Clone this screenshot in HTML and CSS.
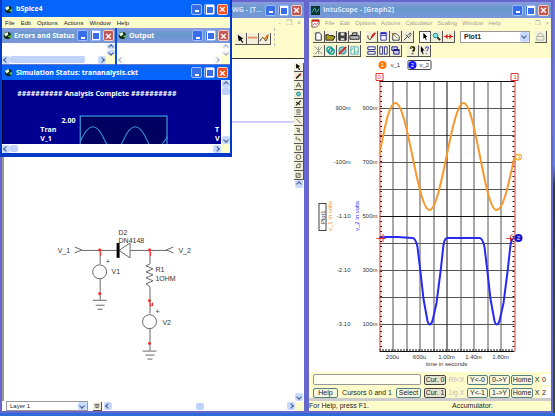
FILE: index.html
```
<!DOCTYPE html>
<html lang="en">
<head>
    <meta charset="UTF-8">
    <meta name="viewport" content="width=device-width, initial-scale=1.0">
    <title>bSpice4</title>
    <link rel="stylesheet" href="styles.css">
</head>
<body>
<div class="desktop">

    <!-- schematic editor -->
    <section class="window schematic">
        <header class="titlebar inactive">
            <h2 class="right">WG - [T...</h2>
            <div class="controls">
                <button class="min" aria-label="Minimize"></button>
                <button class="max" aria-label="Maximize"></button>
                <button class="close" aria-label="Close"></button>
            </div>
        </header>
        <div class="sheet-tools">
            <div class="doc-controls">
                <button aria-label="Minimize sheet">-</button>
                <button aria-label="Restore sheet">&#10064;</button>
                <button aria-label="Close sheet">&times;</button>
            </div>
            <div class="toolbar end">
                <button class="tool" aria-label="Pointer"><svg viewBox="0 0 12 12"><path d="M3 2l6 4-2 1 2 3-1 1-2-3-2 1z"/></svg></button>
                <button class="tool" aria-label="Wire"><svg viewBox="0 0 12 12"><path d="M1 5h10" stroke="#e09060" stroke-width="2"/></svg></button>
                <button class="tool" aria-label="Probe"><svg viewBox="0 0 12 12"><path d="M1 9q3-7 5-2t4-5" fill="none" stroke="#333"/><path d="M6 7l4-5" stroke="#e08010" stroke-width="2"/></svg></button>
            </div>
        </div>
        <div class="sheet">
            <svg class="drawing" viewBox="4 59 291 342">
                <path class="page-edge" d="M2 121.500H297"/>
                <g class="wire">
                    <path d="M75 247l7 3-7 3M82 250.500H119M131 250.500H168M174 247l-7 3 7 3"/>
                    <path d="M130.500 243v15l-11-7.500z"/>
                    <path d="M100.500 250V264M100.500 279V300M93 300.500h14M96 305.500h9M98 309.500h5"/>
                    <circle cx="100" cy="272" r="7"/>
                    <path d="M150.500 250V264l-4 2 7 3-7 3 7 3-7 3 7 3-7 3 4 3V314M150.500 329V351M143 351.500h14M146 355.500h9M148 359.500h5"/>
                    <circle cx="150" cy="322" r="7"/>
                </g>
                <path d="M118.500 243v15" stroke="#000" stroke-width="3"/>
                <g class="pin">
                    <circle cx="100" cy="250" r="1.500"/>
                    <circle cx="150" cy="250" r="1.500"/>
                    <circle cx="100" cy="294" r="1.500"/>
                    <circle cx="150" cy="301" r="1.500"/>
                    <circle cx="150" cy="344" r="1.500"/>
                    <path d="M101 252v4M151 252v4M151 303v3h2v-3"/>
                </g>
                <g class="part">
                    <text x="58" y="253">V_1</text>
                    <text x="179" y="253">V_2</text>
                    <text x="119" y="235">D2</text>
                    <text x="119" y="243">DN4148</text>
                    <text x="112" y="274">V1</text>
                    <text x="156" y="272">R1</text>
                    <text x="156" y="281">1OHM</text>
                    <text x="163" y="325">V2</text>
                    <text x="106" y="264">+</text>
                    <text x="156" y="314">+</text>
                </g>
            </svg>
            <aside class="palette">
                <button class="tool" aria-label="Select"><svg viewBox="0 0 10 10"><path d="M2 1l5 3-2 1 2 3-1 1-2-3-2 1z"/></svg></button>
                <button class="tool" aria-label="Pen"><svg viewBox="0 0 10 10"><path d="M2 8l5-5" stroke="#322" stroke-width="2"/><path d="M6 4l2-2" stroke="#a22" stroke-width="2"/></svg></button>
                <button class="tool" aria-label="Text"><svg viewBox="0 0 10 10"><path class="ln" d="M2 8l3-6 3 6M3 6h4"/></svg></button>
                <button class="tool" aria-label="Zoom"><svg viewBox="0 0 10 10"><circle cx="5" cy="5" r="2.500" fill="#5dd" stroke="#277"/></svg></button>
                <button class="tool" aria-label="Draw"><svg viewBox="0 0 10 10"><path d="M2 8l6-6M2 4l5 3" stroke="#222" stroke-width="1.500"/></svg></button>
                <button class="tool" aria-label="Stamp"><svg viewBox="0 0 10 10"><path d="M3 2h4v4H3zM2 8h6" fill="#bbb" stroke="#777"/></svg></button>
                <button class="tool" aria-label="Line"><svg viewBox="0 0 10 10"><path class="ln" d="M2 2l6 6"/></svg></button>
                <button class="tool" aria-label="Polyline"><svg viewBox="0 0 10 10"><path class="ln" d="M2 3h4v3H3l4 2"/></svg></button>
                <button class="tool" aria-label="Curve"><svg viewBox="0 0 10 10"><path class="ln" d="M3 2q-3 4 1 3t3 3"/></svg></button>
                <button class="tool" aria-label="Rectangle"><svg viewBox="0 0 10 10"><path class="ln" d="M2.500 2.500h5v5h-5z"/></svg></button>
                <button class="tool" aria-label="Ellipse"><svg viewBox="0 0 10 10"><circle class="ln" cx="5" cy="5" r="3"/></svg></button>
                <button class="tool" aria-label="Arc"><svg viewBox="0 0 10 10"><path class="ln" d="M2 7q0-5 5-5v5z"/></svg></button>
                <button class="tool" aria-label="Picture"><svg viewBox="0 0 10 10"><path class="ln" d="M2 3h5v5H2zM3 7l3-3"/></svg></button>
                <button class="scroll up" aria-label="Scroll up"></button>
                <button class="scroll down last" aria-label="Scroll down"></button>
            </aside>
        </div>
        <footer class="sheet-foot">
            <div class="pick layer"><select aria-label="Layer"><option>Layer 1</option></select></div>
            <button class="tool small" aria-label="Layers"><svg viewBox="0 0 10 10"><path d="M2 3h6M2 5h6M3 7h4" stroke="#334"/></svg></button>
            <button class="scroll left" aria-label="Scroll left"></button>
            <span class="track"><i class="thumb"></i></span>
            <button class="scroll right" aria-label="Scroll right"></button>
            <span class="corner"></span>
        </footer>
    </section>

    <!-- waveform viewer -->
    <section class="window scope">
        <header class="titlebar inactive">
            <svg class="app-icon" viewBox="0 0 10 10"><path d="M0 0h10v10H0z" fill="#133"/><path d="M1 7l3-5 2 5 3-4" fill="none" stroke="#3cb"/></svg>
            <h2>IntuScope - [Graph2]</h2>
            <div class="controls">
                <button class="min" aria-label="Minimize"></button>
                <button class="max" aria-label="Maximize"></button>
                <button class="close" aria-label="Close"></button>
            </div>
        </header>
        <nav class="menu muted">
            <svg class="app-icon" viewBox="0 0 10 10"><path d="M1 1h8v5L6 9H1z" fill="#fff" stroke="#844"/><path d="M1 2h8" stroke="#c22" stroke-width="2"/><path d="M2 7l2-2 2 1 2-2" fill="none" stroke="#c33"/></svg>
            <button>File</button><button>Edit</button><button>Options</button><button>Actions</button><button>Calculator</button><button>Scaling</button><button>Window</button><button>Help</button>
            <div class="doc-controls">
                <button aria-label="Minimize graph">-</button>
                <button aria-label="Restore graph">&#10064;</button>
                <button aria-label="Close graph">&times;</button>
            </div>
        </nav>
        <div class="toolbars">
            <div class="toolbar">
                <div class="group">
                    <button class="tool" aria-label="New"><svg viewBox="0 0 12 12"><path d="M3 2h4l2 2v6H3z" fill="#fff" stroke="#222"/></svg></button>
                    <button class="tool" aria-label="Open"><svg viewBox="0 0 12 12"><path d="M1 4h3l1 1h4v1h2l-2 4H1z" fill="#a92" stroke="#222"/></svg></button>
                    <button class="tool" aria-label="Save"><svg viewBox="0 0 12 12"><path d="M2 2h8v8H2z" fill="#444" stroke="#111"/><path d="M4 2h4v3H4zM4 8h4v2H4z" fill="#ddd"/></svg></button>
                    <button class="tool" aria-label="Print"><svg viewBox="0 0 12 12"><path d="M4 2h5l-1 3H3zM1 5h10v4H1z" fill="#bbb" stroke="#222"/></svg></button>
                </div>
                <div class="group">
                    <button class="tool" aria-label="Add trace"><svg viewBox="0 0 12 12"><path d="M2 5q0 5 3 4l3-6" fill="none" stroke="#222"/><path d="M6 7l4-5" stroke="#d22" stroke-width="2"/></svg></button>
                    <button class="tool" aria-label="Table"><svg viewBox="0 0 12 12"><path d="M3 2h6v8H3zM3 5h6" fill="#fff" stroke="#33a"/><path d="M3 2.500h6" stroke="#22c" stroke-width="2"/></svg></button>
                    <button class="tool" aria-label="Edit page"><svg viewBox="0 0 12 12"><path d="M3 3h4l3 3v4H3z" fill="#fff" stroke="#333"/><path d="M2 2l6 6" stroke="#a80"/></svg></button>
                    <button class="tool" aria-label="Pin"><svg viewBox="0 0 12 12"><path d="M2 10l4-4M4 4l4 4M6 5l3-3 1 2-3 3" fill="none" stroke="#344"/></svg></button>
                </div>
                <div class="group">
                    <button class="tool pressed" aria-label="Pointer"><svg viewBox="0 0 12 12"><path d="M4 1l5 5H7l1 4H7L6 7 4 8z"/></svg></button>
                    <button class="tool" aria-label="Zoom"><svg viewBox="0 0 12 12"><circle cx="5" cy="5" r="2.500" fill="#7ee" stroke="#277"/><path d="M7 7l3 3" stroke="#222" stroke-width="2"/></svg></button>
                    <button class="tool" aria-label="Cursors"><svg viewBox="0 0 12 12"><path d="M1 6h10" stroke="#c22"/><path d="M5 3L2 6l3 3zM7 3l3 3-3 3z" fill="#c22"/></svg></button>
                </div>
                <div class="pick plot-select"><select aria-label="Plot"><option>Plot1</option></select></div>
                <button class="tool" aria-label="Lock"><svg viewBox="0 0 12 12"><path d="M3 6V4l3-2 3 2v2M2 6h8v4H2z" fill="none" stroke="#aaa"/></svg></button>
            </div>
            <div class="toolbar">
                <div class="group">
                    <button class="tool" aria-label="Clear"><svg viewBox="0 0 12 12"><path d="M2 2l8 8M10 2l-8 8M6 2v8" stroke="#998"/></svg></button>
                    <button class="tool" aria-label="Overlay"><svg viewBox="0 0 12 12"><circle cx="5" cy="5" r="3" fill="none" stroke="#199" stroke-width="1.500"/><circle cx="7" cy="7" r="3" fill="none" stroke="#199" stroke-width="1.500"/></svg></button>
                    <button class="tool" aria-label="Remove"><svg viewBox="0 0 12 12"><circle cx="6" cy="6" r="4" fill="#8cc" stroke="#199"/><path d="M2 10l8-8" stroke="#d22" stroke-width="2"/></svg></button>
                    <button class="tool" aria-label="Fit"><svg viewBox="0 0 12 12"><path d="M2 2h8v8H2zM2 6q2-4 4 0t4 0M6 2v8" fill="none" stroke="#5bb"/></svg></button>
                </div>
                <div class="group">
                    <button class="tool" aria-label="Tile rows"><svg viewBox="0 0 12 12"><path d="M2 2h8v3H2zM2 7h8v3H2z" fill="#fff" stroke="#227"/></svg></button>
                    <button class="tool" aria-label="Tile columns"><svg viewBox="0 0 12 12"><path d="M2 2h3v8H2zM7 2h3v8H7z" fill="#fff" stroke="#227"/></svg></button>
                    <button class="tool" aria-label="Cascade"><svg viewBox="0 0 12 12"><path d="M2 2h6v4H2zM4 5h6v5H4z" fill="#ccf" stroke="#227"/><path d="M4 5.500h6" stroke="#227" stroke-width="2"/></svg></button>
                </div>
                <div class="group">
                    <button class="tool" aria-label="Help"><svg viewBox="0 0 12 12"><path d="M4 4q0-2 2-2t2 2-2 3M6 9v1" fill="none" stroke="#220" stroke-width="2"/><path d="M4 3l2-1" stroke="#dc0"/></svg></button>
                    <button class="tool" aria-label="What is this"><svg viewBox="0 0 12 12"><path d="M2 1l4 5H4l1 4H4L3 7 2 8z"/><path d="M7 4q0-2 2-2t1 2-2 3M8 9v1" fill="none" stroke="#22a"/></svg></button>
                </div>
            </div>
        </div>
        <svg class="plot" viewBox="310 58 241 314">
            <!-- legend -->
            <circle cx="383" cy="65" r="4" fill="#f70"/>
            <text class="dot" x="383" y="67">1</text>
            <text x="391" y="67">v_1</text>
            <rect class="box" x="408.500" y="60.500" width="23" height="9" rx="1"/>
            <circle cx="413" cy="65" r="4" fill="#11f"/>
            <text class="dot" x="413" y="67">2</text>
            <text x="420" y="67">v_2</text>
            <!-- grid -->
            <path class="grid" d="M393.500 81V351M407.500 81V351M420.500 81V351M434.500 81V351M461.500 81V351M474.500 81V351M488.500 81V351M501.500 81V351M380 108.500H515M380 135.500H515M380 162.500H515M380 189.500H515M380 243.500H515M380 270.500H515M380 297.500H515M380 324.500H515"/>
            <path class="axis" d="M380 81.500H515M447.500 81V351M380 216.500H515M380 351.500H515"/>
            <path class="ticks" d="M381.500 81V351M514 81V351"/>
            <path class="ticks-x" d="M380 350H515"/>
            <path class="cursor" d="M380.500 81V351M515.500 81V351"/>
            <path class="cursor" d="M376.500 73.500h7v7h-7zM511.500 73.500h7v7h-7z"/>
            <text class="red" x="378" y="79">0</text>
            <text class="red" x="514" y="79">1</text>
            <!-- traces -->
            <path class="trace v1" d="M380 154C385 130 389 103 396 103C408 103 418 210 430 210C442 210 452 103 464 103C476 103 485 210 497 210C504 210 509 184 515 157"/>
            <path class="trace v2" d="M380 238L386 237H398L413 238Q416 238 418 247L421 272L424 299L428 321Q430 328 433 321L437 303L441 272L444 245Q445 238 448 238H480Q483 238 485 247L488 272L491 299L495 321Q497 328 500 321L504 303L508 272L511 245Q512 238 515 238"/>
            <path class="cursor" d="M377 238.500h9M383.500 234v8M507 238.500h8M511 241v-5l2-2"/>
            <circle cx="519" cy="157" r="3" fill="#fff" stroke="#f90"/>
            <text class="orange" x="518" y="159">1</text>
            <circle cx="519" cy="238" r="4" fill="#11c"/>
            <text class="dot" x="519" y="240">2</text>
            <!-- scales -->
            <g class="num">
                <text x="351" y="110">900m</text><text x="378" y="110">900m</text>
                <text x="351" y="164">-100m</text><text x="378" y="164">700m</text>
                <text x="351" y="218">-1.10</text><text x="378" y="218">500m</text>
                <text x="351" y="272">-2.10</text><text x="378" y="272">300m</text>
                <text x="351" y="326">-3.10</text><text x="378" y="326">100m</text>
            </g>
            <g class="mid">
                <text x="393" y="359">200u</text><text x="420" y="359">600u</text><text x="447" y="359">1.00m</text><text x="474" y="359">1.40m</text><text x="501" y="359">1.80m</text>
                <text x="447" y="366">time in seconds</text>
            </g>
            <rect class="box" x="319.500" y="203.500" width="7" height="27"/>
            <text transform="translate(325 224) rotate(-90)">Plot1</text>
            <text class="orange" transform="translate(332 231) rotate(-90)">v_1 in volts</text>
            <text class="blue" transform="translate(359 231) rotate(-90)">v_2 in volts</text>
        </svg>
        <div class="cursor-panel">
            <input type="text" class="expr" aria-label="Expression">
            <div class="help-row">
                <button class="btn">Help</button>
                <span>Cursors 0 and 1</span>
                <button class="btn">Select</button>
            </div>
            <div class="cursor-rows">
                <button class="btn dark">Cur. 0</button><button class="btn" disabled>Rt&lt;X</button><button class="btn">Y&lt;-0</button><button class="btn">0-&gt;Y</button><button class="btn">Home</button>
                <label for="x0">X</label><input type="text" id="x0" value="0">
                <button class="btn dark">Cur. 1</button><button class="btn" disabled>1lg X</button><button class="btn">Y&lt;-1</button><button class="btn">1-&gt;Y</button><button class="btn">Home</button>
                <label for="x1">X</label><input type="text" id="x1" value="2">
            </div>
        </div>
        <footer class="status"><span>For Help, press F1.</span><span>Accumulator:</span></footer>
    </section>
</div>

<!-- simulator, floats over the schematic -->
<section class="window spice">
    <header class="titlebar">
        <svg class="app-icon" viewBox="0 0 10 10"><circle cx="5" cy="5" r="4" fill="#121"/><path d="M1 3l4-2 1 3-3 2z" fill="#dfd"/><path d="M5 6l4-2v4z" fill="#5b4"/></svg>
        <h1>bSpice4</h1>
        <div class="controls">
            <button class="min" aria-label="Minimize"></button>
            <button class="max" aria-label="Maximize"></button>
            <button class="close" aria-label="Close"></button>
        </div>
    </header>
    <nav class="menu">
        <button>File</button><button>Edit</button><button>Options</button><button>Actions</button><button>Window</button><button>Help</button>
    </nav>
    <div class="children">
        <section class="child">
            <header class="titlebar inactive">
                <svg class="app-icon" viewBox="0 0 10 10"><circle cx="5" cy="5" r="4" fill="#121"/><path d="M1 3l4-2 1 3-3 2z" fill="#dfd"/><path d="M5 6l4-2v4z" fill="#5b4"/></svg>
                <h2>Errors and Status</h2>
                <div class="controls">
                    <button class="min" aria-label="Minimize"></button>
                    <button class="max" aria-label="Maximize"></button>
                    <button class="close" aria-label="Close"></button>
                </div>
            </header>
            <div class="pane">
                <div class="vbar"><button class="scroll up" aria-label="Scroll up"></button><button class="scroll down" aria-label="Scroll down"></button></div>
                <div class="hbar"><button class="scroll left" aria-label="Scroll left"></button><span class="track"><i class="thumb wide"></i></span><button class="scroll right" aria-label="Scroll right"></button><span class="corner"></span></div>
            </div>
        </section>
        <section class="child">
            <header class="titlebar inactive">
                <svg class="app-icon" viewBox="0 0 10 10"><circle cx="5" cy="5" r="4" fill="#121"/><path d="M1 3l4-2 1 3-3 2z" fill="#dfd"/><path d="M5 6l4-2v4z" fill="#5b4"/></svg>
                <h2>Output</h2>
                <div class="controls">
                    <button class="min" aria-label="Minimize"></button>
                    <button class="max" aria-label="Maximize"></button>
                    <button class="close" aria-label="Close"></button>
                </div>
            </header>
            <div class="pane idle">
                <div class="vbar"><button class="scroll up" aria-label="Scroll up"></button><button class="scroll down" aria-label="Scroll down"></button></div>
                <div class="hbar"><button class="scroll left" aria-label="Scroll left"></button><span class="track"></span><button class="scroll right" aria-label="Scroll right"></button><span class="corner"></span></div>
            </div>
        </section>
    </div>
    <section class="sim">
        <header class="titlebar">
            <svg class="app-icon" viewBox="0 0 10 10"><circle cx="5" cy="5" r="4" fill="#121"/><path d="M1 3l4-2 1 3-3 2z" fill="#dfd"/><path d="M5 6l4-2v4z" fill="#5b4"/></svg>
            <h2>Simulation Status: trananalysis.ckt</h2>
            <div class="controls">
                <button class="min" aria-label="Minimize"></button>
                <button class="max" aria-label="Maximize"></button>
                <button class="close" aria-label="Close"></button>
            </div>
        </header>
        <div class="sim-body">
            <svg class="sim-view" viewBox="3 80 216 63">
                <text x="17" y="96">########## Analysis Complete ##########</text>
                <text x="61" y="122">2.00</text>
                <text x="40" y="131">Tran</text>
                <text x="40" y="140">V_1</text>
                <text x="213" y="131">T</text>
                <text x="213" y="140">V</text>
                <rect x="79.500" y="115.500" width="86" height="40"/>
                <path d="M80 140Q92 112 104 140L107 146M119 146L122 140Q134 112 146 140L149 146M161 143L166 136"/>
            </svg>
            <div class="vbar"><button class="scroll up" aria-label="Scroll up"></button><i class="thumb"></i><button class="scroll down last" aria-label="Scroll down"></button></div>
        </div>
        <div class="hbar"><button class="scroll left" aria-label="Scroll left"></button><span class="track"><i class="thumb start"></i></span><button class="scroll right" aria-label="Scroll right"></button><span class="corner"></span></div>
    </section>
</section>
</body>
</html>
```
FILE: styles.css
```
* {
    box-sizing: border-box;
}
body {
    margin: 0;
    font-family: "Liberation Sans", Arial, sans-serif;
    font-size: 7px;
    line-height: 8px;
    color: #222;
}
button, input, select {
    font: inherit;
    color: inherit;
    margin: 0;
    padding: 0;
    border: none;
    background: none;
}
svg {
    display: block;
}
h1, h2 {
    margin: 0;
    font: bold 7px/10px "Open Sans", sans-serif;
    color: #fff;
    white-space: nowrap;
}
.desktop {
    display: flex;
    height: 100vh;
    padding-right: 2px;
    background: linear-gradient(#6c78d8, #5a88e0 40%, #2c4434 45%, #33502c);
    border-bottom: 3px solid #2f6bd8;
}
.window {
    display: flex;
    flex-direction: column;
    border: 2px solid #6666cc;
    background: #fffccc;
}

/* title bars */
.titlebar {
    display: flex;
    align-items: center;
    gap: 3px;
    padding: 0 2px;
    background: #0564fa;
}
.titlebar.inactive {
    background: linear-gradient(#8c9ce0, #6699cc 40%, #7a96dc);
}
.app-icon {
    width: 9px;
    height: 9px;
    flex: none;
}
.controls {
    display: flex;
    gap: 2px;
    margin-left: auto;
}
.controls button {
    display: flex;
    align-items: center;
    justify-content: center;
    width: 11px;
    height: 11px;
    background: #3a6ee8;
    border: 1px solid #99bbff;
    border-radius: 2px;
}
.controls .min::before {
    content: "";
    width: 4px;
    height: 2px;
    margin-top: 4px;
    background: #fff;
}
.controls .max::before {
    content: "";
    width: 6px;
    height: 6px;
    border: 1px solid #fff;
    border-top-width: 2px;
}
.controls .close {
    background: #f05020;
    border-color: #ffccbb;
    color: #fff;
}
.controls .close::before {
    content: "\00d7";
    font: bold 11px/8px "Liberation Sans", sans-serif;
}
.controls .close:hover {
    background: #ff6a3c;
}
.inactive .controls .close {
    background: #c05858;
}

/* menus and tool bars */
.menu {
    display: flex;
    align-items: center;
    gap: 6px;
    height: 10px;
    padding: 0 3px;
    background: #fffccc;
    font-size: 6px;
}
.muted {
    gap: 5px;
    padding: 0 2px;
    color: #a8a090;
}
.doc-controls {
    display: flex;
    gap: 5px;
    margin-left: auto;
    color: #aaa;
}
.toolbars {
    padding-top: 2px;
}
.toolbar {
    display: flex;
    align-items: center;
    height: 14px;
    gap: 5px;
    padding: 0 4px;
}
.group {
    display: flex;
}
.tool {
    width: 12px;
    height: 12px;
    background: #f4f0d8;
    border-right: 1px solid #555;
    border-bottom: 1px solid #555;
}
.tool svg {
    width: 100%;
    height: 100%;
}
.pressed {
    border: 1px solid #555;
    background: #fff;
}
.ln {
    fill: none;
    stroke: #444;
}

/* drop-downs */
.pick {
    position: relative;
    border: 1px solid #999;
    background: #fff;
}
.pick select {
    display: block;
    width: 100%;
    height: 100%;
    padding: 0 3px;
    appearance: none;
}
.pick::before {
    content: "";
    position: absolute;
    top: 0;
    right: 0;
    bottom: 0;
    width: 9px;
    border-radius: 2px;
    background: #c6daff;
}
.pick::after {
    content: "";
    position: absolute;
    top: 2px;
    right: 3px;
    width: 3px;
    height: 3px;
    border: solid #445588;
    border-width: 0 1px 1px 0;
    transform: rotate(45deg);
}

/* scroll bars */
.scroll {
    display: flex;
    align-items: center;
    justify-content: center;
    width: 8px;
    height: 8px;
    flex: none;
    border-radius: 2px;
    background: #c6daff;
}
.scroll::before {
    content: "";
    width: 3px;
    height: 3px;
    border: solid #445588;
    border-width: 1px 1px 0 0;
}
.scroll.up::before {
    transform: rotate(-45deg);
}
.scroll.down::before {
    transform: rotate(135deg);
}
.scroll.left::before {
    transform: rotate(-135deg);
}
.scroll.right::before {
    transform: rotate(45deg);
}
.last {
    margin-top: auto;
}
.hbar {
    display: flex;
    align-items: center;
    height: 9px;
    background: #fff;
}
.vbar {
    display: flex;
    flex-direction: column;
    align-items: center;
    width: 9px;
    background: #fff;
}
.track {
    display: flex;
    justify-content: center;
    flex: 1;
    background: #fff;
}
.thumb {
    width: 8px;
    height: 7px;
    border-radius: 2px;
    background: #c0d2fc;
}
.wide {
    width: 85%;
    margin-right: auto;
}
.start {
    margin-right: auto;
}
.corner {
    width: 9px;
    height: 9px;
    background: #fffccc;
}

/* schematic editor */
.schematic {
    flex: 307;
    min-width: 0;
}
.schematic > .titlebar, .scope > .titlebar {
    height: 16px;
}
.right {
    margin-left: auto;
    color: #d8e0fc;
}
.right + .controls {
    margin-left: 0;
}
.sheet-tools {
    height: 41px;
    border-bottom: 1px solid #333;
}
.sheet-tools .doc-controls {
    justify-content: flex-end;
    padding: 1px 3px;
}
.end {
    justify-content: flex-end;
    gap: 0;
    height: 18px;
    margin-right: 29px;
    padding: 4px 3px 0;
    border-right: 1px dashed #bbb;
}
.sheet {
    display: flex;
    flex: 1;
    min-height: 0;
    background: #fff;
    border-left: 2px solid #999;
}
.drawing {
    flex: 1;
    min-width: 0;
    height: 100%;
}
.page-edge {
    stroke: #c8c8fc;
    stroke-width: 2;
}
.wire {
    fill: none;
    stroke: #666;
}
.pin {
    fill: #f22;
}
.pin path {
    fill: none;
    stroke: #f22;
}
.part {
    font-size: 7px;
    fill: #333;
}
.palette {
    display: flex;
    flex-direction: column;
    align-items: center;
    width: 10px;
    padding-top: 4px;
}
.palette .tool {
    width: 10px;
    height: 9px;
    flex: none;
}
.sheet-foot {
    display: flex;
    align-items: center;
    height: 10px;
    padding-left: 4px;
    background: #fff;
}
.layer {
    width: 82px;
    height: 10px;
    margin-right: 5px;
    font-size: 6px;
}
.small {
    width: 9px;
    height: 9px;
    margin-right: 2px;
}

/* waveform viewer */
.scope {
    flex: 246;
    min-width: 0;
    border-left-width: 3px;
}
.scope h2 {
    color: #dfe8ff;
}
.plot-select {
    width: 72px;
    height: 12px;
    font-weight: bold;
}
.plot {
    flex: 1;
    min-height: 0;
    width: 100%;
    background: #fff;
    font-size: 6px;
    fill: #333;
}
.box {
    fill: none;
    stroke: #444;
}
.dot {
    fill: #fff;
    text-anchor: middle;
}
.grid {
    stroke: #555;
    fill: none;
}
.axis {
    stroke: #111;
}
.ticks {
    stroke: #111;
    stroke-width: 2;
    stroke-dasharray: 1 4;
}
.ticks-x {
    stroke: #111;
    stroke-width: 2;
    stroke-dasharray: 1 2;
}
.cursor {
    fill: none;
    stroke: #e03030;
}
.trace {
    fill: none;
    stroke-width: 2;
}
.v1 {
    stroke: #f8982c;
}
.v2 {
    stroke: #2828f0;
}
.num {
    text-anchor: end;
}
.mid {
    text-anchor: middle;
}
.red {
    fill: #e03030;
}
.orange {
    fill: #f80;
}
.blue {
    fill: #22f;
}
.cursor-panel {
    display: grid;
    grid-template-columns: 108px 1fr;
    gap: 2px 3px;
    padding: 2px 0 0 4px;
}
.expr {
    height: 11px;
    border: 1px solid #999;
    border-radius: 2px;
    background: #fffff4;
}
.help-row {
    display: flex;
    align-items: center;
    justify-content: space-between;
    grid-row: 2;
    white-space: nowrap;
}
.cursor-rows {
    display: grid;
    grid-template-columns: 22px 19px 21px 21px 22px 6px 1fr;
    gap: 2px 1px;
    grid-row: 1 / 3;
    grid-column: 2;
    align-items: center;
}
.cursor-rows label {
    text-align: center;
}
.cursor-rows input {
    width: 100%;
    min-width: 0;
    height: 11px;
    padding-left: 1px;
    background: #fff;
}
.btn {
    height: 10px;
    border: 1px solid #558080;
    border-radius: 2px;
    background: #f8f8e0;
    line-height: 7px;
    white-space: nowrap;
}
.help-row .btn {
    width: 25px;
}
.btn:disabled {
    border-color: transparent;
    background: none;
    color: #bbb;
}
.dark {
    background: #e4e4d0;
    border-color: #444;
}
.status {
    display: grid;
    grid-template-columns: 143px 1fr;
    align-items: center;
    height: 13px;
    border-top: 3px solid #ccc;
}

/* simulator */
.spice {
    position: absolute;
    left: 0;
    top: 0;
    width: 232px;
    height: 157px;
    border-color: #0038c8;
    border-top: none;
    border-bottom-width: 4px;
    background: #0b50d8;
}
.spice > .titlebar {
    height: 17px;
    flex: none;
    padding-top: 1px;
}
.spice > .menu {
    height: 11px;
    flex: none;
}
.children {
    display: grid;
    grid-template-columns: 1fr 1fr;
    gap: 2px;
}
.child {
    background: #fff;
    border-bottom: 1px solid #6677cc;
}
.child .titlebar {
    height: 15px;
    gap: 2px;
    padding: 0 1px;
}
.pane {
    display: flex;
    flex-direction: column;
}
.pane .vbar {
    width: 9px;
    height: 12px;
    margin-left: auto;
}
.pane .vbar .scroll {
    height: 5px;
    margin-top: 1px;
}
.idle .scroll {
    background: #f4f4f0;
    opacity: 0.5;
}
.sim {
    display: flex;
    flex: 1;
    flex-direction: column;
    min-height: 0;
}
.sim > .titlebar {
    height: 15px;
}
.sim-body {
    display: flex;
    flex: 1;
    min-height: 0;
    border-left: 1px solid #000044;
}
.sim-view {
    flex: 1;
    min-width: 0;
    height: 100%;
    background: #000090;
    font: bold 7px "Open Sans", sans-serif;
    fill: #fff;
}
.sim-view rect {
    fill: #000060;
    stroke: #4cb8f0;
}
.sim-view path {
    fill: none;
    stroke: #3c9cdc;
}
```
